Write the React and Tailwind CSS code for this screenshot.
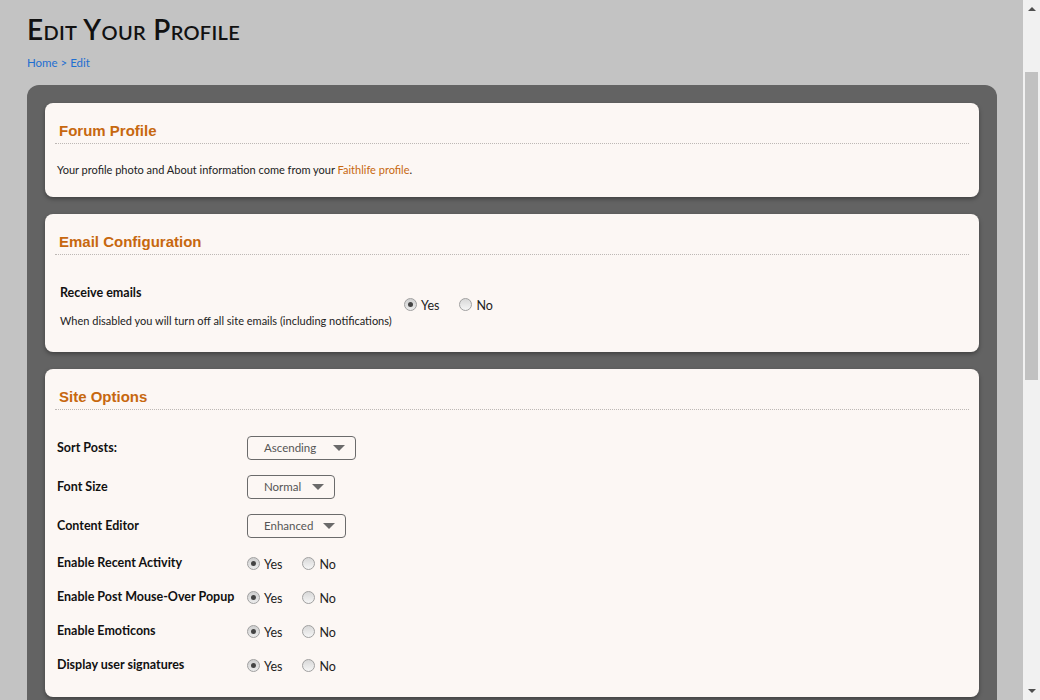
import { useState } from 'react';

const sans = "font-['Lato','Open_Sans',sans-serif]";

function Radio({ checked }) {
    return (
        <span className={`w-[13px] h-[13px] rounded-full border border-[#a0a0a0] bg-gradient-to-b ${checked ? 'from-[#cfcfcf] to-[#ececec]' : 'from-[#d8d8d8] to-[#f6f6f6]'} flex items-center justify-center shrink-0`}>
            {checked && <span className="w-[5px] h-[5px] rounded-full bg-[#444]"></span>}
        </span>
    );
}

function YesNo({ value = true, gap = "gap-[20px]" }) {
    return (
        <div className={`flex items-center ${gap} text-[12.5px] text-[#222]`}>
            <label className="flex items-center gap-[4px]">
                <Radio checked={value} />
                <span className="translate-y-[2px]">Yes</span>
            </label>
            <label className="flex items-center gap-[4px]">
                <Radio checked={!value} />
                <span className="translate-y-[2px]">No</span>
            </label>
        </div>
    );
}

function Select({ label, width }) {
    return (
        <div className={`${width} h-[24px] border border-[#6b6b6b] rounded-[4px] flex items-center justify-between pl-[16px] pr-[10px] text-[11.5px] text-[#555]`}>
            <span>{label}</span>
            <svg className="w-[12px] h-[6px]" viewBox="0 0 12 6">
                <path d="M0 0h12L6 6z" fill="#6a6a6a" />
            </svg>
        </div>
    );
}

function Card({ title, children, bodyClass }) {
    return (
        <div className="bg-[#fcf7f4] rounded-[8px] shadow-[0_2px_4px_rgba(0,0,0,0.35)] px-[10px]">
            <div className="pt-[18px] pb-[2px] pl-[4px] border-b border-dotted border-[#bdb8b5]">
                <h2 className="font-['Liberation_Sans',Arial,sans-serif] font-bold text-[15px] leading-[20px] text-[#c7680f]">{title}</h2>
            </div>
            <div className={bodyClass}>{children}</div>
        </div>
    );
}

export default function App() {
    const [sort] = useState('Ascending');

    const radioRows = [
        'Enable Recent Activity',
        'Enable Post Mouse-Over Popup',
        'Enable Emoticons',
        'Display user signatures'
    ];

    return (
        <div className={`flex h-[700px] overflow-hidden bg-[#c3c3c3] ${sans}`}>
            <div className="w-[1023px] pl-[27px] pr-[26px]">
                <h1 className="text-[28px] leading-[34px] pt-[12px] font-semibold text-[#111] [font-variant:small-caps] tracking-[0.3px]">
                    Edit Your Profile
                </h1>
                <div className="mt-[9px] text-[11.5px] leading-[16px] text-[#1f6fd1]">
                    <a href="#">Home</a> &gt; <a href="#">Edit</a>
                </div>

                <div className="mt-[14px] bg-[#636363] rounded-[12px] p-[18px] flex flex-col gap-[17px] h-[640px]">
                    <Card title="Forum Profile" bodyClass="pt-[18px] pb-[19px] px-[2px]">
                        <p className="text-[11px] leading-[16px] text-[#222]">
                            Your profile photo and About information come from your{' '}
                            <a href="#" className="text-[#c7680f]">Faithlife profile</a>.
                        </p>
                    </Card>

                    <Card title="Email Configuration" bodyClass="pt-[29px] pb-[23px] px-[5px] flex items-center">
                        <div className="w-[344px]">
                            <div className="text-[12.5px] leading-[18px] font-bold text-[#111]">Receive emails</div>
                            <div className="mt-[11px] text-[11px] leading-[16px] text-[#222] whitespace-nowrap">
                                When disabled you will turn off all site emails (including notifications)
                            </div>
                        </div>
                        <div className="pb-[4px]">
                            <YesNo gap="gap-[20px]" />
                        </div>
                    </Card>

                    <Card title="Site Options" bodyClass="pt-[26px] pb-[23px] px-[2px]">
                        <div className="flex flex-col gap-[15px]">
                            <div className="flex items-center">
                                <div className="w-[190px] text-[12.5px] font-bold text-[#111]">Sort Posts:</div>
                                <Select label={sort} width="w-[109px]" />
                            </div>
                            <div className="flex items-center">
                                <div className="w-[190px] text-[12.5px] font-bold text-[#111]">Font Size</div>
                                <Select label="Normal" width="w-[88px]" />
                            </div>
                            <div className="flex items-center">
                                <div className="w-[190px] text-[12.5px] font-bold text-[#111]">Content Editor</div>
                                <Select label="Enhanced" width="w-[99px]" />
                            </div>
                        </div>
                        <div className="mt-[16px] flex flex-col gap-[16px]">
                            {radioRows.map((row) => (
                                <div key={row} className="flex items-center h-[18px]">
                                    <div className="w-[190px] text-[12.5px] font-bold text-[#111]">{row}</div>
                                    <YesNo gap="gap-[20px]" />
                                </div>
                            ))}
                        </div>
                    </Card>
                </div>
            </div>

            {/* fake scrollbar */}
            <div className="w-[17px] bg-[#f1f1f1] flex flex-col items-center">
                <svg className="mt-[7px] w-[8px] h-[4px]" viewBox="0 0 8 4"><path d="M0 4L4 0l4 4z" fill="#505050" /></svg>
                <div className="mt-[61px] w-[13px] h-[308px] bg-[#c1c1c1]"></div>
                <div className="flex-1"></div>
                <svg className="mb-[7px] w-[8px] h-[4px]" viewBox="0 0 8 4"><path d="M0 0h8L4 4z" fill="#505050" /></svg>
            </div>
        </div>
    );
}
